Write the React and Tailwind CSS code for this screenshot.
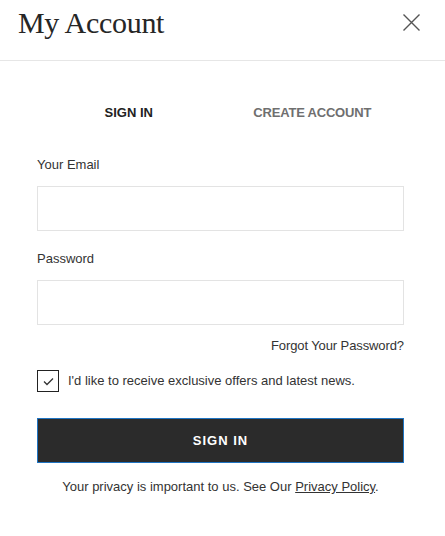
export default function App() {
  return (
    <div className="w-[445px] h-[536px] bg-white text-[#2b2b2b]" style={{ fontFamily: '"Liberation Sans", Arial, sans-serif' }}>
      <div className="h-[61px] border-b border-[#e6e6e6] flex items-start justify-between pl-[18px] pr-[25px]">
        <h1 className="mt-[8px] text-[30px] leading-[30px] tracking-[-0.3px] text-[#262626]" style={{ fontFamily: '"Liberation Serif", "Times New Roman", serif' }}>My Account</h1>
        <svg className="mt-[14px]" width="17" height="17" viewBox="0 0 17 17" fill="none" stroke="#555" strokeWidth="1.4">
          <path d="M0.5 0.5 L16.5 16.5 M16.5 0.5 L0.5 16.5" />
        </svg>
      </div>
      <div className="pl-[37px] pr-[41px]">
        <div className="grid grid-cols-2 mt-[42px] text-[13px] leading-[20px] font-semibold">
          <div className="text-center text-[#222]">SIGN IN</div>
          <div className="text-center text-[#6f6f6f] tracking-[-0.2px]">CREATE ACCOUNT</div>
        </div>
        <div className="mt-[32px] text-[13px] leading-[20px] text-[#333]">Your Email</div>
        <div className="mt-[11px] h-[45px] border border-[#e3e3e3]"></div>
        <div className="mt-[18px] text-[13px] leading-[20px] text-[#333]">Password</div>
        <div className="mt-[11px] h-[45px] border border-[#e3e3e3]"></div>
        <div className="mt-[11px] text-[13px] leading-[20px] text-[#333] text-right tracking-[-0.1px]">Forgot Your Password?</div>
        <div className="mt-[14px] flex items-center gap-[9px]">
          <div className="w-[22px] h-[22px] border border-[#222] flex items-center justify-center">
            <svg width="11" height="9" viewBox="0 0 11 9" fill="none" stroke="#333" strokeWidth="1.3">
              <path d="M1 4.5 L4 7.5 L10 1.5" />
            </svg>
          </div>
          <div className="text-[13px] leading-[20px] text-[#333]">I'd like to receive exclusive offers and latest news.</div>
        </div>
        <button className="mt-[26px] w-full h-[45px] bg-[#2b2b2b] border border-[#1f74c2] text-white text-[13px] font-bold tracking-[1px] flex items-center justify-center">SIGN IN</button>
        <div className="mt-[14px] text-[13px] leading-[20px] text-[#333] text-center">
          Your privacy is important to us. See Our <span className="underline">Privacy Policy</span>.
        </div>
      </div>
    </div>
  );
}
